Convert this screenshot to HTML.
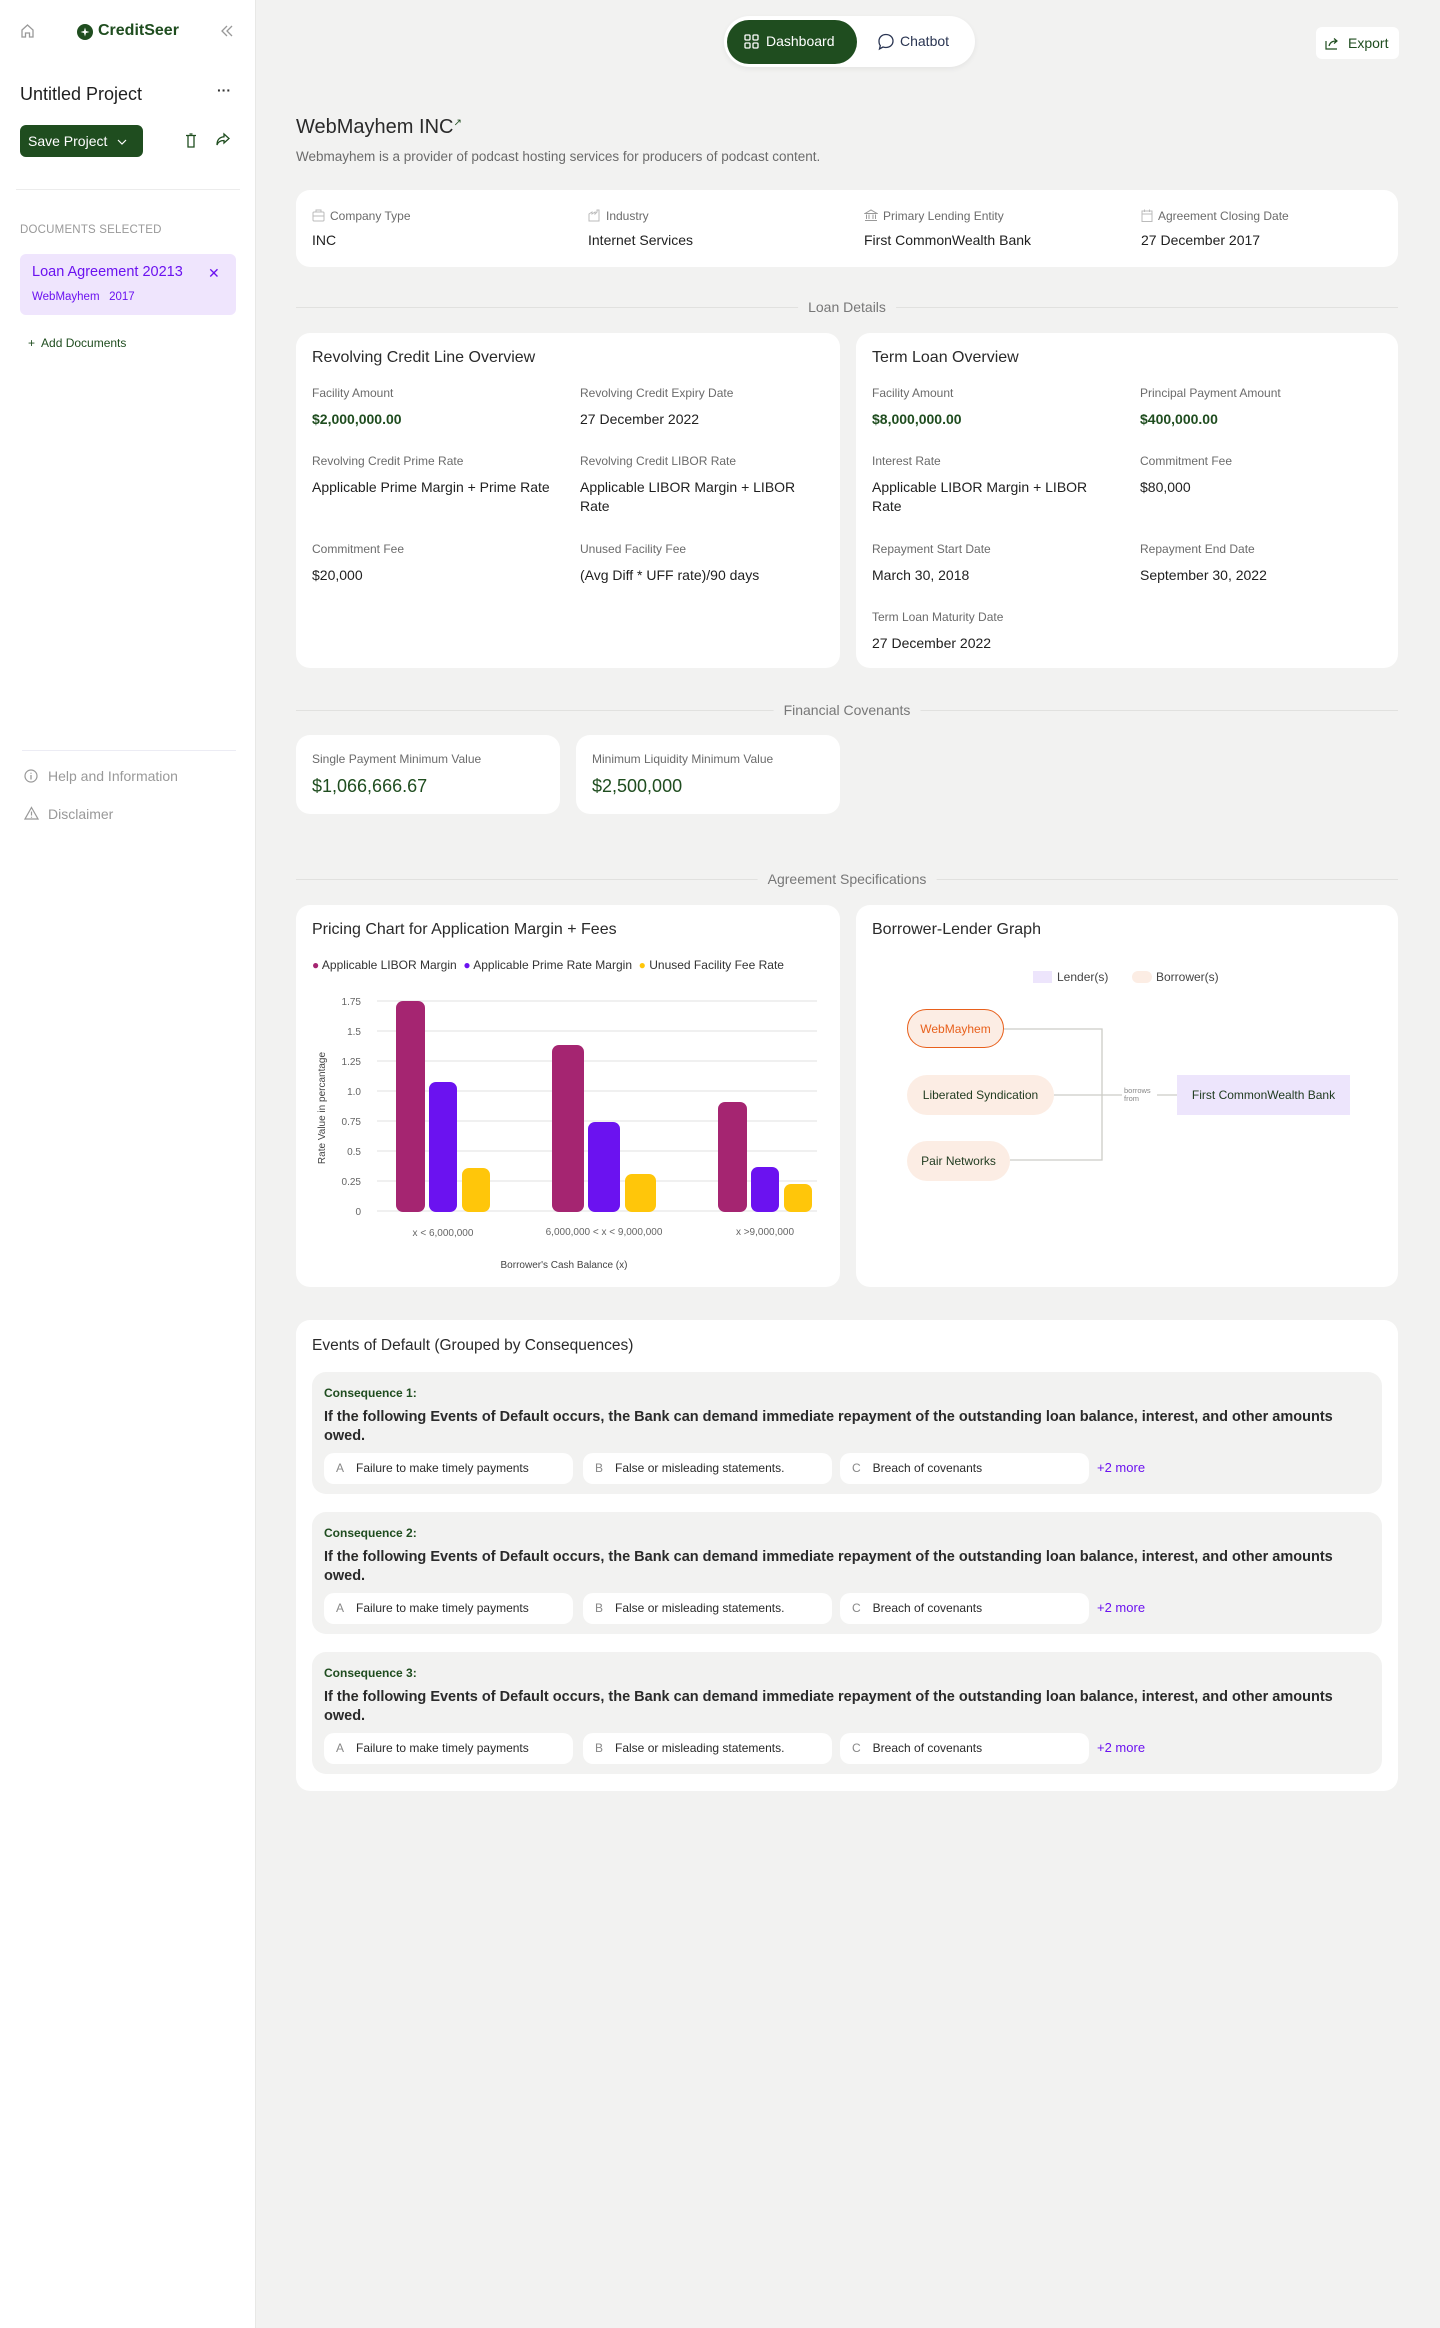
<!DOCTYPE html>
<html><head><meta charset="utf-8">
<style>
*{box-sizing:border-box;margin:0;padding:0}
body{width:1440px;height:2328px;background:#f2f2f1;font-family:"Liberation Sans",sans-serif;color:#1f1f1f;position:relative;overflow:hidden}
.abs{position:absolute}
.side{position:absolute;left:0;top:0;width:256px;height:2328px;background:#fff;border-right:1px solid #e8e8e6}
.card{position:absolute;background:#fff;border-radius:14px}
.lbl{position:absolute;font-size:12px;color:#6b6b6b;white-space:nowrap}
.lbl svg{vertical-align:-2px;margin-right:5px}
.val{position:absolute;font-size:14px;color:#1f1f1f;line-height:19px}
.g{color:#1f4d1f;font-weight:bold}
.ttl{position:absolute;font-size:16px;color:#2a2a2a}
.div{position:absolute;left:296px;width:1102px;height:1px;background:#e1e1df}
.divt{position:absolute;font-size:14px;color:#777;background:#f2f2f1;padding:0 10px;transform:translate(-50%,-50%);left:847px}
.cons{position:absolute;left:312px;width:1070px;height:122px;background:#f2f2f1;border-radius:14px}
.cons .h{position:absolute;left:12px;top:14px;font-size:12px;font-weight:bold;color:#1f4d1f}
.cons .b{position:absolute;left:12px;top:36px;width:1050px;font-size:14.5px;font-weight:bold;line-height:19px;color:#2a2a2a}
.pill{position:absolute;top:81px;width:249px;height:31px;background:#fff;border-radius:10px;font-size:12px;color:#2a2a2a;line-height:31px;padding-left:12px;white-space:nowrap}
.pill span{color:#888;margin-right:12px}
.more{position:absolute;left:785px;top:88px;font-size:13px;color:#6b12f0}
.node{position:absolute;background:#fcede4;border-radius:20px;font-size:12px;color:#1f3a1f;display:flex;align-items:center;justify-content:center;white-space:nowrap}
</style></head><body>

<div class="side">
  <svg class="abs" style="left:20px;top:23px" width="15" height="16" viewBox="0 0 15 16"><path d="M2 7 L7.5 2 L13 7 V14 H9.5 V10 H5.5 V14 H2 Z" fill="none" stroke="#999" stroke-width="1.3"/></svg>
  <svg class="abs" style="left:77px;top:24px" width="16" height="16" viewBox="0 0 16 16"><circle cx="8" cy="8" r="8" fill="#1f4d1f"/><path d="M8 3.5 L9 7 L12.5 8 L9 9 L8 12.5 L7 9 L3.5 8 L7 7 Z" fill="#fff"/></svg>
  <div class="abs" style="left:98px;top:22px;font-size:16px;font-weight:bold;color:#1f4d1f">CreditSeer</div>
  <svg class="abs" style="left:220px;top:24px" width="14" height="14" viewBox="0 0 14 14"><path d="M7 2 L2 7 L7 12 M12 2 L7 7 L12 12" fill="none" stroke="#999" stroke-width="1.3"/></svg>
  <div class="abs" style="left:20px;top:84px;font-size:18px;color:#1f1f1f">Untitled Project</div>
  <div class="abs" style="left:217px;top:82px;font-size:14px;font-weight:bold;color:#333">···</div>
  <div class="abs" style="left:20px;top:125px;width:123px;height:32px;background:#1f4d1f;border-radius:6px;color:#fff;font-size:14px;line-height:32px;padding-left:8px">Save Project <svg style="margin-left:6px;vertical-align:middle" width="10" height="8" viewBox="0 0 10 8"><path d="M1 2 L5 6 L9 2" fill="none" stroke="#fff" stroke-width="1.2"/></svg></div>
  <svg class="abs" style="left:185px;top:133px" width="12" height="15" viewBox="0 0 12 15"><path d="M1 2.5 H11 M3 2.5 V14 H9 V2.5 M4.5 1 H7.5" fill="none" stroke="#1f4d1f" stroke-width="1.3"/></svg>
  <svg class="abs" style="left:215px;top:132px" width="16" height="15" viewBox="0 0 16 15"><path d="M9 2 L14 6.5 L9 11 V8.5 C5 8.5 3 10 2 13 C2 8 4.5 5 9 4.8 Z" fill="none" stroke="#1f4d1f" stroke-width="1.3"/></svg>
  <div class="abs" style="left:16px;top:189px;width:224px;height:1px;background:#ececec"></div>
  <div class="abs" style="left:20px;top:224px;font-size:11.5px;color:#999;letter-spacing:.2px">DOCUMENTS SELECTED</div>
  <div class="abs" style="left:20px;top:254px;width:216px;height:61px;background:#efe5fd;border-radius:6px"></div>
  <div class="abs" style="left:32px;top:264px;font-size:14.5px;color:#6b12f0">Loan Agreement 20213</div>
  <div class="abs" style="left:208px;top:265px;font-size:14px;color:#6b12f0">✕</div>
  <div class="abs" style="left:32px;top:291px;font-size:11.5px;color:#6b12f0">WebMayhem&nbsp;&nbsp; 2017</div>
  <div class="abs" style="left:28px;top:336px;font-size:12px;color:#1f4d1f">+&nbsp; Add Documents</div>
  <div class="abs" style="left:22px;top:750px;width:214px;height:1px;background:#ececf4"></div>
  <svg class="abs" style="left:24px;top:769px" width="14" height="14" viewBox="0 0 14 14"><circle cx="7" cy="7" r="6" fill="none" stroke="#999" stroke-width="1.2"/><path d="M7 6 V10.5 M7 3.8 V4.8" stroke="#999" stroke-width="1.3"/></svg>
  <div class="abs" style="left:48px;top:768px;font-size:14px;color:#999">Help and Information</div>
  <svg class="abs" style="left:24px;top:806px" width="15" height="14" viewBox="0 0 15 14"><path d="M7.5 1.5 L14 13 H1 Z" fill="none" stroke="#999" stroke-width="1.2"/><path d="M7.5 5.5 V9.5 M7.5 10.7 V11.7" stroke="#999" stroke-width="1.2"/></svg>
  <div class="abs" style="left:48px;top:806px;font-size:14px;color:#999">Disclaimer</div>
</div>

<!-- top toggle -->
<div class="abs" style="left:724px;top:16px;width:251px;height:51px;background:#fff;border-radius:26px;box-shadow:0 2px 6px rgba(0,0,0,.06)"></div>
<div class="abs" style="left:727px;top:20px;width:130px;height:44px;background:#1f4d1f;border-radius:22px"></div>
<svg class="abs" style="left:744px;top:34px" width="15" height="15" viewBox="0 0 15 15"><g fill="none" stroke="#fff" stroke-width="1.3"><rect x="1" y="1" width="5" height="5" rx="1"/><rect x="9" y="1" width="5" height="5" rx="1"/><rect x="1" y="9" width="5" height="5" rx="1"/><rect x="9" y="9" width="5" height="5" rx="1"/></g></svg>
<div class="abs" style="left:766px;top:33px;font-size:14px;color:#fff">Dashboard</div>
<svg class="abs" style="left:877px;top:33px" width="18" height="18" viewBox="0 0 18 18"><path d="M9 1.5 C13 1.5 16 4.3 16 8 C16 11.7 13 14.5 9 14.5 C8 14.5 7 14.3 6 14 L2.5 16 L3.3 12.6 C2.2 11.4 2 9.8 2 8 C2 4.3 5 1.5 9 1.5 Z" fill="none" stroke="#2a3552" stroke-width="1.3"/></svg>
<div class="abs" style="left:900px;top:33px;font-size:14px;color:#2a3552">Chatbot</div>
<div class="abs" style="left:1316px;top:27px;width:83px;height:32px;background:#fff;border-radius:6px"></div>
<svg class="abs" style="left:1325px;top:36px" width="14" height="14" viewBox="0 0 14 14"><path d="M1 5 V13 H12 M4 10 C5 6 8 5 11 5 M9 2.5 L12 5 L9 7.5" fill="none" stroke="#1f4d1f" stroke-width="1.2"/></svg>
<div class="abs" style="left:1348px;top:35px;font-size:14px;color:#1f4d1f">Export</div>

<!-- header -->
<div class="abs" style="left:296px;top:116px;font-size:20px;color:#2a2a2a">WebMayhem INC<sup style="font-size:10px;color:#1f4d1f">↗</sup></div>
<div class="abs" style="left:296px;top:149px;font-size:13.5px;color:#6b6b6b">Webmayhem is a provider of podcast hosting services for producers of podcast content.</div>

<div class="card" style="left:296px;top:190px;width:1102px;height:77px"></div>
<div class="lbl" style="left:312px;top:209px"><svg width="13" height="13" viewBox="0 0 13 13"><rect x="1" y="3" width="11" height="9" rx="1" fill="none" stroke="#bbb"/><path d="M4 3 V1 H9 V3 M1 7 H12" stroke="#bbb" fill="none"/></svg>Company Type</div>
<div class="val" style="left:312px;top:231px">INC</div>
<div class="lbl" style="left:588px;top:209px"><svg width="13" height="13" viewBox="0 0 13 13"><path d="M1 12 V5 L4 3 V5 L7 3 V5 L9 3 V1 H11 V12 Z" fill="none" stroke="#bbb"/></svg>Industry</div>
<div class="val" style="left:588px;top:231px">Internet Services</div>
<div class="lbl" style="left:864px;top:209px"><svg width="14" height="13" viewBox="0 0 14 13"><path d="M1 4.5 L7 1 L13 4.5 Z M2.5 5.5 V10 M5 5.5 V10 M9 5.5 V10 M11.5 5.5 V10 M1 11.5 H13" fill="none" stroke="#999"/></svg>Primary Lending Entity</div>
<div class="val" style="left:864px;top:231px">First CommonWealth Bank</div>
<div class="lbl" style="left:1141px;top:209px"><svg width="12" height="13" viewBox="0 0 12 13"><rect x="1" y="2" width="10" height="10.5" fill="none" stroke="#bbb"/><path d="M1 5 H11 M3.5 0.5 V3 M8.5 0.5 V3" stroke="#bbb"/></svg>Agreement Closing Date</div>
<div class="val" style="left:1141px;top:231px">27 December 2017</div>

<!-- Loan details -->
<div class="div" style="top:307px"></div><div class="divt" style="top:307px">Loan Details</div>

<div class="card" style="left:296px;top:333px;width:544px;height:335px"></div>
<div class="ttl" style="left:312px;top:349px">Revolving Credit Line Overview</div>
<div class="lbl" style="left:312px;top:386px">Facility Amount</div>
<div class="val g" style="left:312px;top:410px">$2,000,000.00</div>
<div class="lbl" style="left:580px;top:386px">Revolving Credit Expiry Date</div>
<div class="val" style="left:580px;top:410px">27 December 2022</div>
<div class="lbl" style="left:312px;top:454px">Revolving Credit Prime Rate</div>
<div class="val" style="left:312px;top:478px">Applicable Prime Margin + Prime Rate</div>
<div class="lbl" style="left:580px;top:454px">Revolving Credit LIBOR Rate</div>
<div class="val" style="left:580px;top:478px;width:240px">Applicable LIBOR Margin + LIBOR Rate</div>
<div class="lbl" style="left:312px;top:542px">Commitment Fee</div>
<div class="val" style="left:312px;top:566px">$20,000</div>
<div class="lbl" style="left:580px;top:542px">Unused Facility Fee</div>
<div class="val" style="left:580px;top:566px">(Avg Diff * UFF rate)/90 days</div>

<div class="card" style="left:856px;top:333px;width:542px;height:335px"></div>
<div class="ttl" style="left:872px;top:349px">Term Loan Overview</div>
<div class="lbl" style="left:872px;top:386px">Facility Amount</div>
<div class="val g" style="left:872px;top:410px">$8,000,000.00</div>
<div class="lbl" style="left:1140px;top:386px">Principal Payment Amount</div>
<div class="val g" style="left:1140px;top:410px">$400,000.00</div>
<div class="lbl" style="left:872px;top:454px">Interest Rate</div>
<div class="val" style="left:872px;top:478px;width:240px">Applicable LIBOR Margin + LIBOR Rate</div>
<div class="lbl" style="left:1140px;top:454px">Commitment Fee</div>
<div class="val" style="left:1140px;top:478px">$80,000</div>
<div class="lbl" style="left:872px;top:542px">Repayment Start Date</div>
<div class="val" style="left:872px;top:566px">March 30, 2018</div>
<div class="lbl" style="left:1140px;top:542px">Repayment End Date</div>
<div class="val" style="left:1140px;top:566px">September 30, 2022</div>
<div class="lbl" style="left:872px;top:610px">Term Loan Maturity Date</div>
<div class="val" style="left:872px;top:634px">27 December 2022</div>

<!-- Financial covenants -->
<div class="div" style="top:710px"></div><div class="divt" style="top:710px">Financial Covenants</div>
<div class="card" style="left:296px;top:735px;width:264px;height:79px"></div>
<div class="lbl" style="left:312px;top:752px">Single Payment Minimum Value</div>
<div class="abs" style="left:312px;top:776px;font-size:18px;color:#1f4d1f">$1,066,666.67</div>
<div class="card" style="left:576px;top:735px;width:264px;height:79px"></div>
<div class="lbl" style="left:592px;top:752px">Minimum Liquidity Minimum Value</div>
<div class="abs" style="left:592px;top:776px;font-size:18px;color:#1f4d1f">$2,500,000</div>

<!-- Agreement specs -->
<div class="div" style="top:879px"></div><div class="divt" style="top:879px">Agreement Specifications</div>

<div class="card" style="left:296px;top:905px;width:544px;height:382px"></div>
<div class="ttl" style="left:312px;top:921px">Pricing Chart for Application Margin + Fees</div>
<div class="abs" style="left:312px;top:958px;font-size:12px;color:#333;white-space:nowrap"><span style="color:#a52571">●</span> Applicable LIBOR Margin&nbsp; <span style="color:#6b12f0">●</span> Applicable Prime Rate Margin&nbsp; <span style="color:#ffc60a">●</span> Unused Facility Fee Rate</div>
<svg class="abs" style="left:296px;top:905px" width="544" height="382" viewBox="296 905 544 382">
  <g stroke="#ececec" stroke-width="1.5">
    <line x1="377" y1="1001" x2="817" y2="1001"/><line x1="377" y1="1031" x2="817" y2="1031"/><line x1="377" y1="1061" x2="817" y2="1061"/><line x1="377" y1="1091" x2="817" y2="1091"/><line x1="377" y1="1121" x2="817" y2="1121"/><line x1="377" y1="1151" x2="817" y2="1151"/><line x1="377" y1="1181" x2="817" y2="1181"/><line x1="377" y1="1211" x2="817" y2="1211"/>
  </g>
  <g font-family="Liberation Sans" font-size="10" fill="#666" text-anchor="end">
    <text x="361" y="1005">1.75</text><text x="361" y="1035">1.5</text><text x="361" y="1065">1.25</text><text x="361" y="1095">1.0</text><text x="361" y="1125">0.75</text><text x="361" y="1155">0.5</text><text x="361" y="1185">0.25</text><text x="361" y="1215">0</text>
  </g>
  <text transform="translate(325 1108) rotate(-90)" font-family="Liberation Sans" font-size="10" fill="#444" text-anchor="middle">Rate Value in percantage</text>
  <g fill="#a52571"><rect x="396" y="1001" width="29" height="211" rx="7"/><rect x="552" y="1045" width="32" height="167" rx="7"/><rect x="718" y="1102" width="29" height="110" rx="7"/></g>
  <g fill="#6b12f0"><rect x="429" y="1082" width="28" height="130" rx="7"/><rect x="588" y="1122" width="32" height="90" rx="7"/><rect x="751" y="1167" width="28" height="45" rx="7"/></g>
  <g fill="#ffc60a"><rect x="462" y="1168" width="28" height="44" rx="7"/><rect x="625" y="1174" width="31" height="38" rx="7"/><rect x="784" y="1184" width="28" height="28" rx="7"/></g>
  <g font-family="Liberation Sans" font-size="10" fill="#666" text-anchor="middle">
    <text x="443" y="1236">x &lt; 6,000,000</text><text x="604" y="1235">6,000,000 &lt; x &lt; 9,000,000</text><text x="765" y="1235">x &gt;9,000,000</text>
    <text x="564" y="1268" fill="#444">Borrower's Cash Balance (x)</text>
  </g>
</svg>

<div class="card" style="left:856px;top:905px;width:542px;height:382px"></div>
<div class="ttl" style="left:872px;top:921px">Borrower-Lender Graph</div>
<div class="abs" style="left:1033px;top:971px;width:19px;height:12px;background:#ede5fc"></div>
<div class="abs" style="left:1057px;top:970px;font-size:12px;color:#444">Lender(s)</div>
<div class="abs" style="left:1132px;top:971px;width:20px;height:12px;background:#fcede4;border-radius:6px"></div>
<div class="abs" style="left:1156px;top:970px;font-size:12px;color:#444">Borrower(s)</div>
<svg class="abs" style="left:856px;top:905px" width="542" height="382" viewBox="856 905 542 382">
  <path d="M1004 1029 H1102 V1160 H1010 M1054 1095 H1122 M1157 1095 H1177" fill="none" stroke="#ccccc6" stroke-width="1.3"/>
  <text x="1124" y="1093" font-family="Liberation Sans" font-size="7.5" fill="#888">borrows</text>
  <text x="1124" y="1101" font-family="Liberation Sans" font-size="7.5" fill="#888">from</text>
</svg>
<div class="node" style="left:907px;top:1009px;width:97px;height:39px;border:1.3px solid #e8601c;color:#e8601c">WebMayhem</div>
<div class="node" style="left:907px;top:1075px;width:147px;height:40px">Liberated Syndication</div>
<div class="node" style="left:907px;top:1141px;width:103px;height:40px">Pair Networks</div>
<div class="abs" style="left:1177px;top:1075px;width:173px;height:40px;background:#ede5fc;font-size:12px;color:#1f3a1f;display:flex;align-items:center;justify-content:center">First CommonWealth Bank</div>

<!-- Events -->
<div class="card" style="left:296px;top:1320px;width:1102px;height:471px"></div>
<div class="ttl" style="left:312px;top:1337px;font-size:15.5px">Events of Default (Grouped by Consequences)</div>

<div class="cons" style="top:1372px">
  <div class="h">Consequence 1:</div>
  <div class="b">If the following Events of Default occurs, the Bank can demand immediate repayment of the outstanding loan balance, interest, and other amounts owed.</div>
  <div class="pill" style="left:12px"><span>A</span>Failure to make timely payments</div>
  <div class="pill" style="left:271px"><span>B</span>False or misleading statements.</div>
  <div class="pill" style="left:528px"><span>C</span>Breach of covenants</div>
  <div class="more">+2 more</div>
</div>
<div class="cons" style="top:1512px">
  <div class="h">Consequence 2:</div>
  <div class="b">If the following Events of Default occurs, the Bank can demand immediate repayment of the outstanding loan balance, interest, and other amounts owed.</div>
  <div class="pill" style="left:12px"><span>A</span>Failure to make timely payments</div>
  <div class="pill" style="left:271px"><span>B</span>False or misleading statements.</div>
  <div class="pill" style="left:528px"><span>C</span>Breach of covenants</div>
  <div class="more">+2 more</div>
</div>
<div class="cons" style="top:1652px">
  <div class="h">Consequence 3:</div>
  <div class="b">If the following Events of Default occurs, the Bank can demand immediate repayment of the outstanding loan balance, interest, and other amounts owed.</div>
  <div class="pill" style="left:12px"><span>A</span>Failure to make timely payments</div>
  <div class="pill" style="left:271px"><span>B</span>False or misleading statements.</div>
  <div class="pill" style="left:528px"><span>C</span>Breach of covenants</div>
  <div class="more">+2 more</div>
</div>
</body></html>
